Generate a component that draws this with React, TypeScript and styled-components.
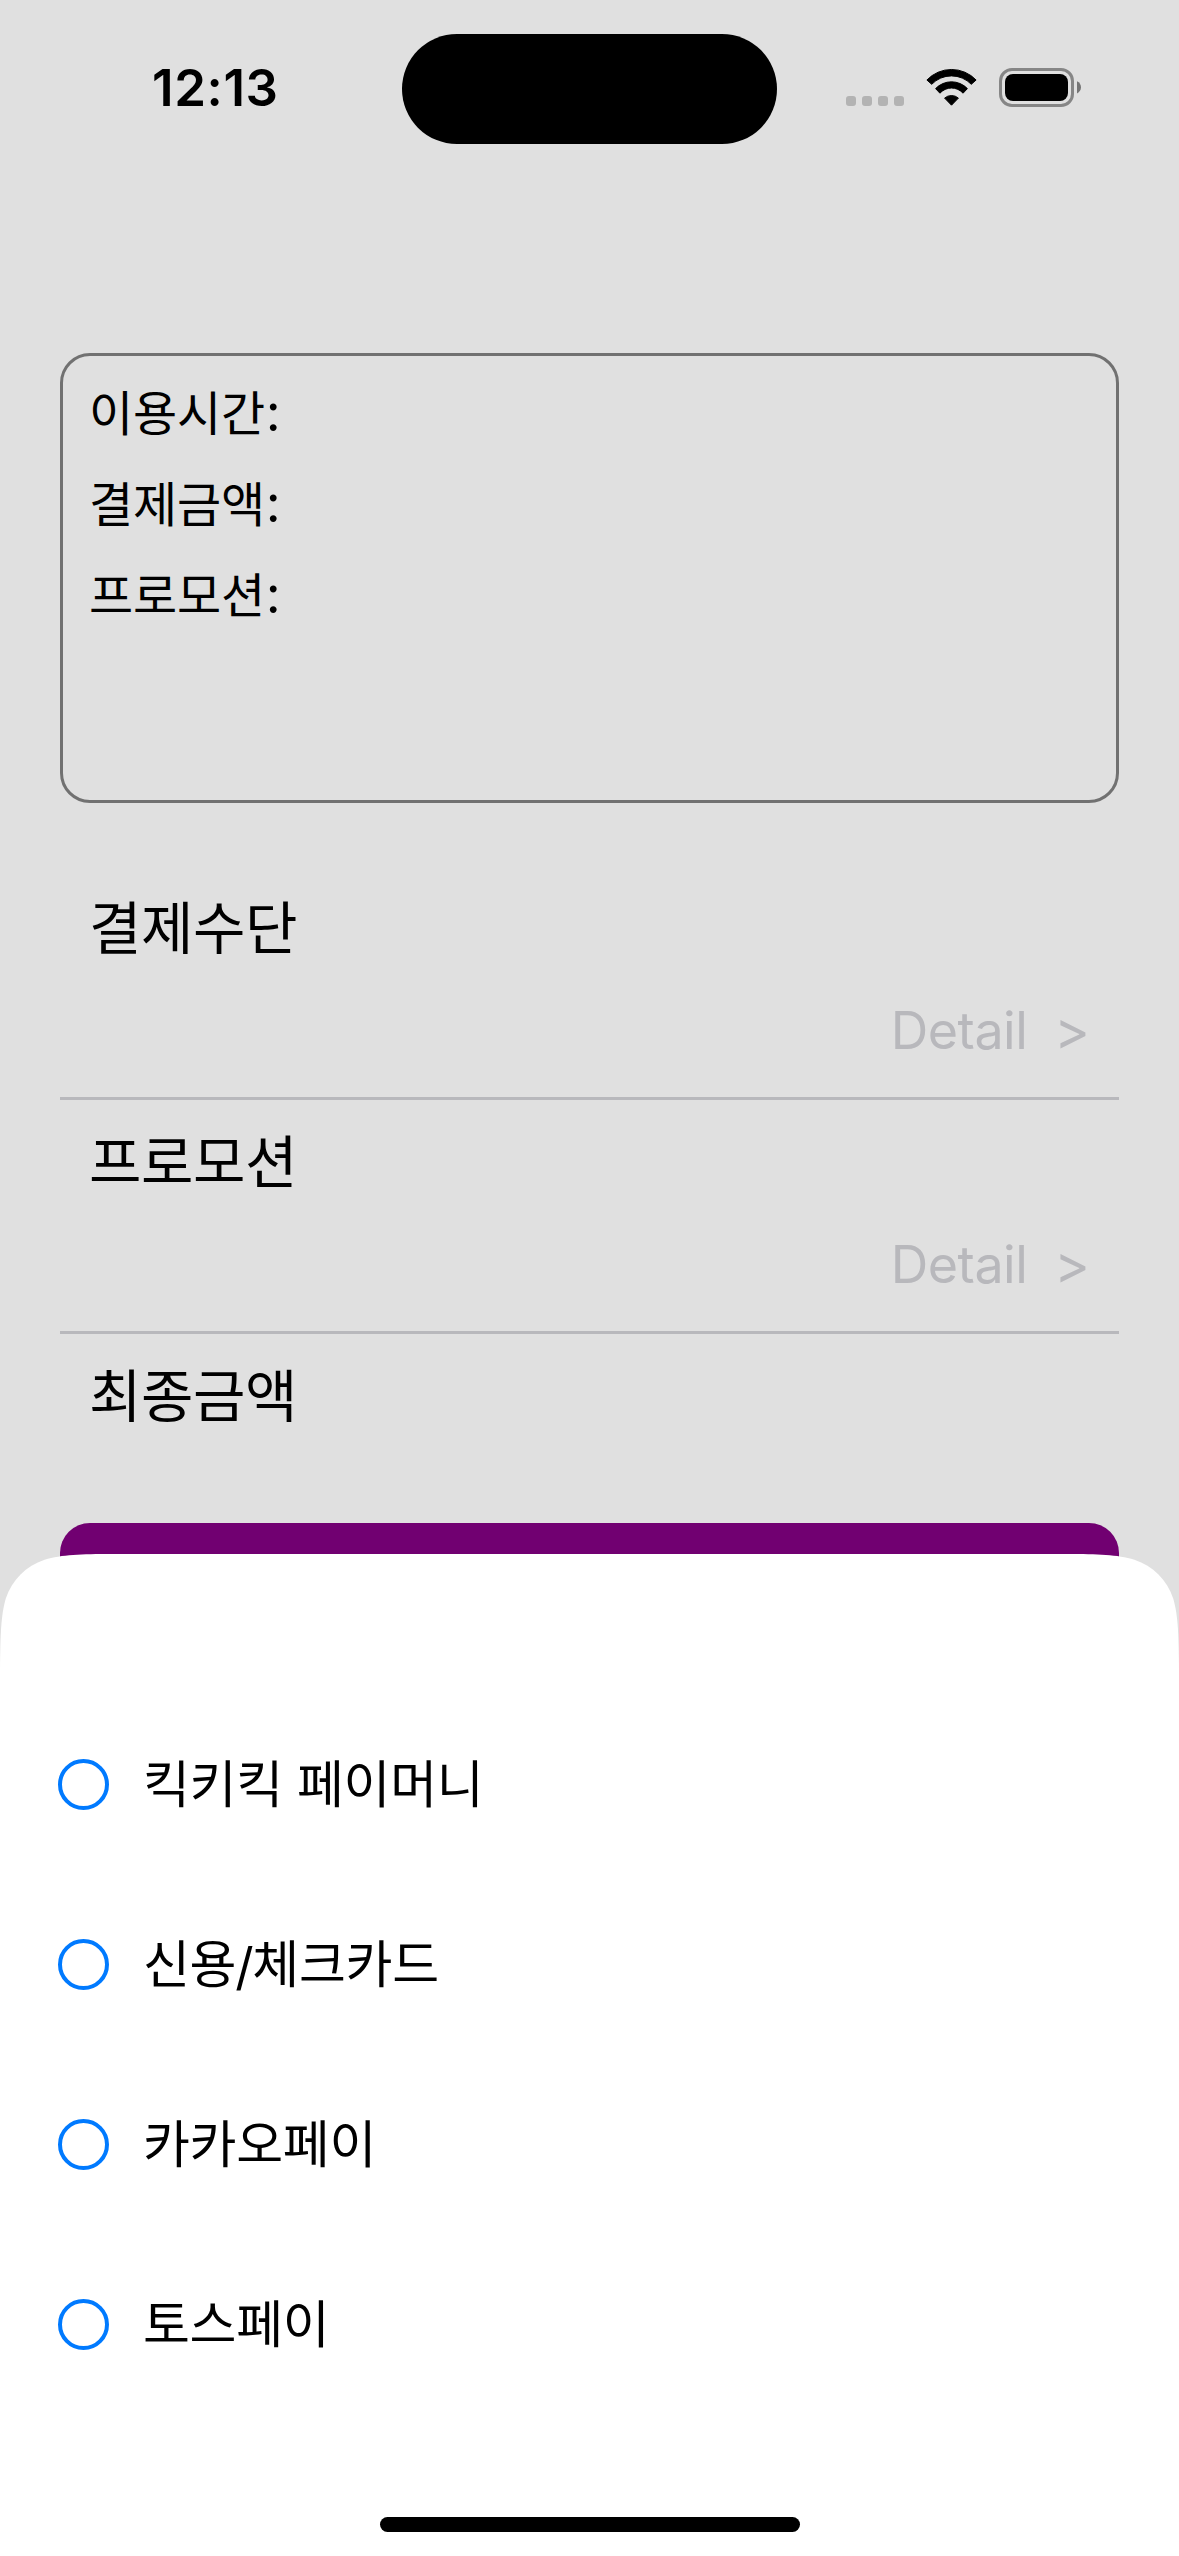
import React from 'react';
import styled, { createGlobalStyle } from 'styled-components';

const GlobalStyle = createGlobalStyle`
  *, *::before, *::after { box-sizing: border-box; }
  html, body { margin: 0; padding: 0; background: #e0e0e0; }
`;

const Screen = styled.main`
  position: relative;
  width: 1179px;
  height: 2556px;
  overflow: hidden;
  background: #e0e0e0;
  color: #000;
  font-family: Inter, 'Noto Sans CJK KR', sans-serif;
  font-weight: 400;
`;

const StatusBar = styled.header`
  display: grid;
  grid-template-columns: 402px 375px 1fr;
  align-items: start;
  height: 353px;
  padding-top: 33px;
`;

const Clock = styled.time`
  padding-left: 152px;
  font-size: 51px;
  font-weight: 600;
  line-height: 110px;
  letter-spacing: 0.6px;
`;

const Island = styled.div`
  height: 110px;
  margin-top: 1px;
  border-radius: 55px;
  background: #000;
`;

const StatusIcons = styled.div`
  display: flex;
  align-items: center;
  gap: 22px;
  padding: 35px 0 0 69px;
`;

const Icon = styled.svg`
  display: block;
  flex: none;
`;

const Content = styled.section`
  padding: 0 60px;
`;

const SummaryCard = styled.dl`
  height: 450px;
  margin: 0 0 63px;
  padding: 12px 26px;
  border: 3px solid #717171;
  border-radius: 30px;
`;

const SummaryLabel = styled.dt`
  font-size: 48px;
  line-height: 91px;
  letter-spacing: -0.2px;
`;

const Colon = styled.span`
  margin-left: 1px;
  font-size: 52px;
  line-height: 0;
`;

const FieldSection = styled.section<{ $last?: boolean }>`
  height: ${(p) => (p.$last ? 189 : 234)}px;
  padding: 17px 29px 0;
  border-bottom: ${(p) => (p.$last ? '0' : '3px solid #b8b8bc')};
`;

const FieldTitle = styled.h2`
  margin: 0;
  font-size: 57px;
  font-weight: 400;
  line-height: 92px;
  letter-spacing: -0.4px;
`;

const DetailButton = styled.button`
  display: flex;
  justify-content: flex-end;
  gap: 27px;
  width: 100%;
  padding: 0;
  border: 0;
  background: none;
  color: #b8b8bc;
  font: inherit;
  font-size: 52px;
  line-height: 112px;
`;

const DetailText = styled.span`
  letter-spacing: -0.5px;
`;

const Chevron = styled.span`
  font-size: 54px;
`;

const PayButton = styled.div`
  height: 150px;
  border-radius: 30px;
  background: #710071;
`;

const Sheet = styled.section`
  position: absolute;
  left: 0;
  right: 0;
  bottom: 0;
  height: 1002px;
  display: flex;
  flex-direction: column;
  padding: 205px 58px 24px;
  background: #fff;
  clip-path: path('M112 0H1067C1098 0 1117 0.5 1134.4 5.8C1153 12 1167 26 1173.2 44.6C1178.2 62 1178.6 81 1179 116V1002H0V116C0.4 81 0.8 62 5.8 44.6C12 26 26 12 44.6 5.8C62 0.5 81 0 112 0Z');
`;

const OptionList = styled.div`
  display: flex;
  flex-direction: column;
  gap: 129px;
`;

const Option = styled.label`
  display: flex;
  align-items: center;
  gap: 34px;
  height: 51px;
  font-size: 51px;
  line-height: 51px;
  letter-spacing: -0.3px;
  white-space: nowrap;
`;

const Slash = styled.span`
  display: inline-block;
  margin: 0 -1px;
  line-height: 0;
  transform: translateY(2px);
`;

const Radio = styled.span`
  width: 51px;
  height: 51px;
  border: 4px solid #007aff;
  border-radius: 50%;
`;

const HomeIndicator = styled.div`
  width: 420px;
  height: 15px;
  margin: auto auto 0 322px;
  border-radius: 8px;
  background: #000;
`;

const SignalDots = () => (
  <Icon width="58" height="39" viewBox="0 0 58 39" fill="#b3b3b3">
    {[0, 16, 32, 48].map((x) => (
      <rect key={x} x={x} y="28" width="10" height="10" rx="3" />
    ))}
  </Icon>
);

const Wifi = () => (
  <Icon width="51" height="39" viewBox="0 -1 51 39" fill="#000" stroke="#000" strokeWidth="1" strokeLinejoin="round">
    <path d="M0.9 11A34 34 0 0 1 50.1 11L45.3 15.3A27.5 27.5 0 0 0 5.7 15.3Z" />
    <path d="M9.6 19.6A22 22 0 0 1 41.4 19.6L37.1 24.2A15.6 15.6 0 0 0 13.9 24.2Z" />
    <path d="M18.6 29.1A10.5 10.5 0 0 1 32.4 29.1L25.5 36.2Z" />
  </Icon>
);

const Battery = () => (
  <Icon width="82" height="39" viewBox="0 0 82 39">
    <rect x="1.5" y="1.5" width="72" height="36" rx="11.5" fill="none" stroke="#868686" strokeWidth="3" />
    <rect x="6" y="6" width="63" height="27" rx="8" fill="#000" />
    <path d="M78 13.2C80.6 14.3 82 16.7 82 19.3S80.6 24.3 78 25.4Z" fill="#757575" />
  </Icon>
);

const summary = ['이용시간', '결제금액', '프로모션'];
const fields = ['결제수단', '프로모션'];
const methods = [
  { id: 'paymoney', label: '킥키킥 페이머니' },
  { id: 'card', label: <>신용<Slash>/</Slash>체크카드</> },
  { id: 'kakao', label: '카카오페이' },
  { id: 'toss', label: '토스페이' },
];

export default function App() {
  return (
    <>
      <GlobalStyle />
      <Screen lang="ko">
        <StatusBar>
          <Clock>12:13</Clock>
          <Island />
          <StatusIcons>
            <SignalDots />
            <Wifi />
            <Battery />
          </StatusIcons>
        </StatusBar>
        <Content>
          <SummaryCard>
            {summary.map((label) => (
              <SummaryLabel key={label}>
                {label}
                <Colon>:</Colon>
              </SummaryLabel>
            ))}
          </SummaryCard>
          {fields.map((title) => (
            <FieldSection key={title}>
              <FieldTitle>{title}</FieldTitle>
              <DetailButton>
                <DetailText>Detail</DetailText>
                <Chevron>&gt;</Chevron>
              </DetailButton>
            </FieldSection>
          ))}
          <FieldSection $last>
            <FieldTitle>최종금액</FieldTitle>
          </FieldSection>
          <PayButton />
        </Content>
        <Sheet>
          <OptionList role="radiogroup">
            {methods.map((method) => (
              <Option key={method.id}>
                <Radio role="radio" aria-checked="false" />
                <span>{method.label}</span>
              </Option>
            ))}
          </OptionList>
          <HomeIndicator />
        </Sheet>
      </Screen>
    </>
  );
}
